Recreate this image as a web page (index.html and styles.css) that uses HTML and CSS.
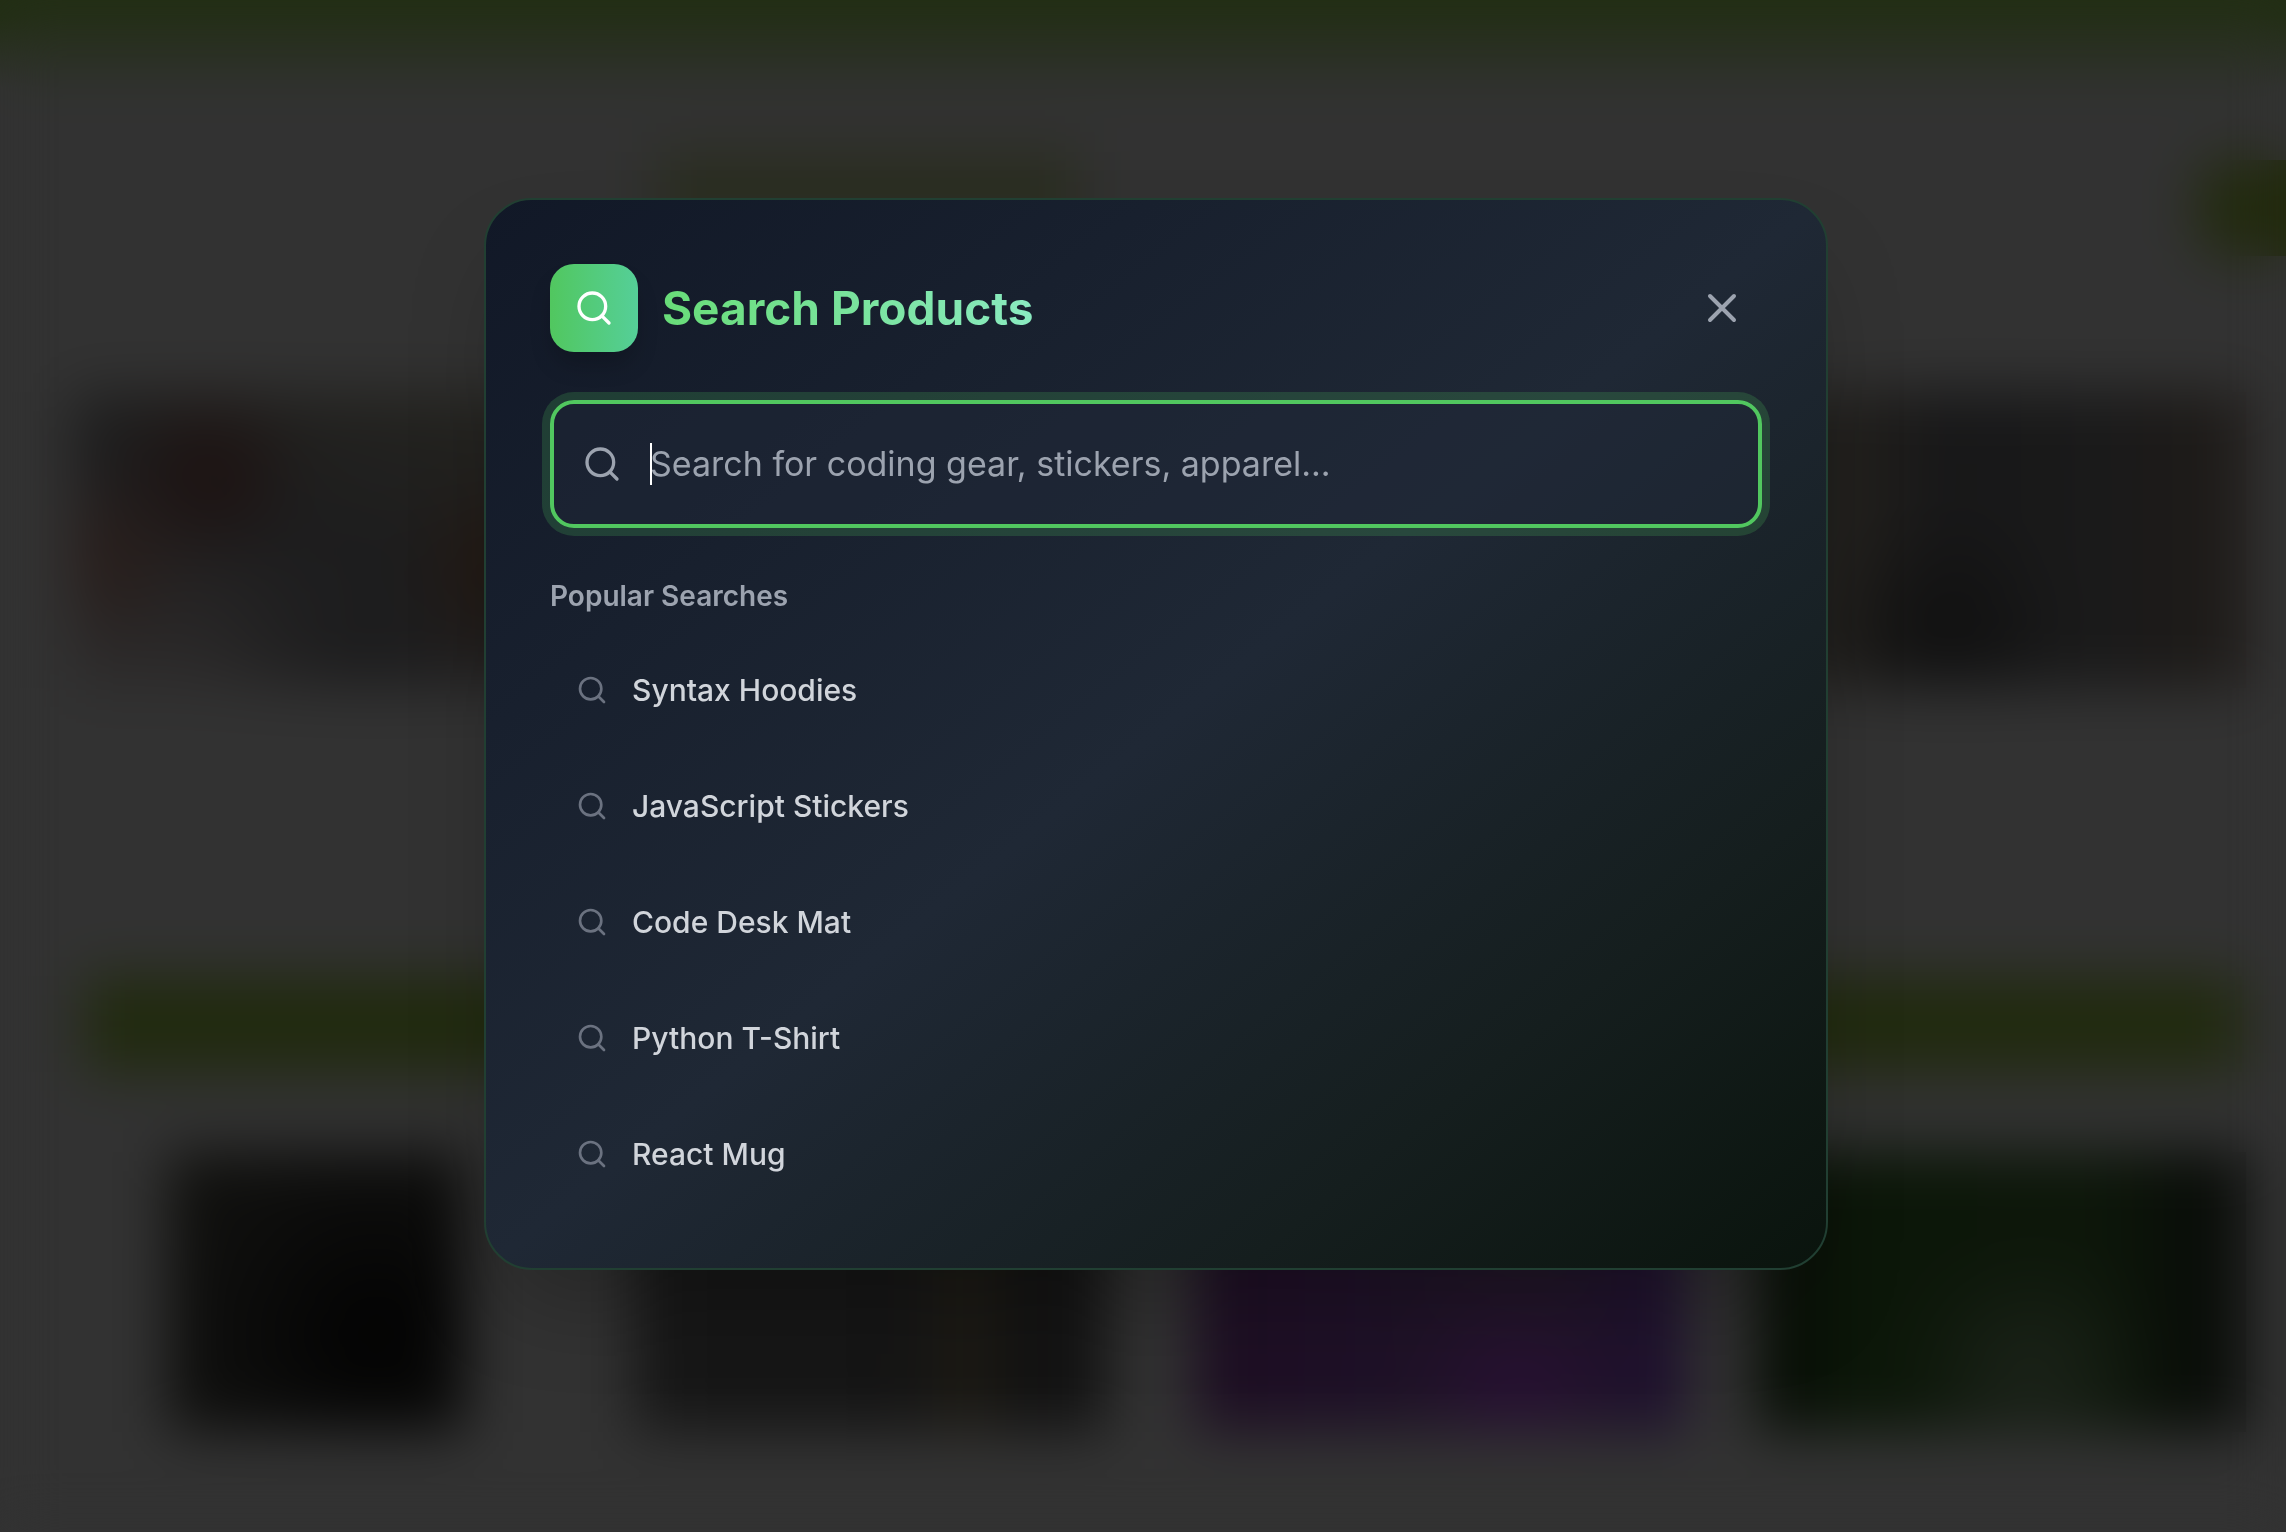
FILE: index.html
```html
<!DOCTYPE html>
<html lang="en">
<head>
<meta charset="utf-8">
<meta name="viewport" content="width=device-width, initial-scale=1">
<title>Search Products</title>
<link rel="stylesheet" href="styles.css">
</head>
<body>
<svg class="sprite" aria-hidden="true">
  <symbol id="search" viewBox="0 0 24 24"><circle cx="11" cy="11" r="8"/><path d="m21 21-4.3-4.3"/></symbol>
  <symbol id="close" viewBox="0 0 24 24"><path d="M18 6 6 18M6 6l12 12"/></symbol>
</svg>

<div class="shop" aria-hidden="true">
  <div class="shop-bar"></div>
  <div class="shop-tools">
    <div class="shop-filter"></div>
    <div class="shop-cart"></div>
  </div>
  <div class="shop-grid shop-grid-top">
    <div class="photo photo-desk"></div>
    <div class="photo photo-plain"></div>
    <div class="photo photo-plain"></div>
    <div class="photo photo-shelf"></div>
  </div>
  <div class="shop-grid shop-grid-buttons">
    <div class="buy"></div>
    <div class="buy"></div>
    <div class="buy"></div>
    <div class="buy"></div>
  </div>
  <div class="shop-grid shop-grid-bottom">
    <div class="photo photo-black"></div>
    <div class="photo photo-gray"></div>
    <div class="photo photo-purple"></div>
    <div class="photo photo-green"></div>
  </div>
</div>

<div class="overlay">
  <section class="dialog" role="dialog" aria-modal="true" aria-labelledby="dialog-title">
    <header class="dialog-header">
      <span class="badge"><svg class="icon icon-md"><use href="#search"/></svg></span>
      <h2 class="title" id="dialog-title">Search Products</h2>
      <button class="close" type="button" aria-label="Close"><svg class="icon icon-lg"><use href="#close"/></svg></button>
    </header>
    <label class="field">
      <svg class="icon icon-md" aria-hidden="true"><use href="#search"/></svg>
      <span class="caret"></span>
      <input class="input" type="text" aria-label="Search products" placeholder="Search for coding gear, stickers, apparel..." autofocus>
    </label>
    <h3 class="subtitle">Popular Searches</h3>
    <ul class="list">
      <li><button class="item" type="button"><svg class="icon icon-sm"><use href="#search"/></svg><span>Syntax Hoodies</span></button></li>
      <li><button class="item" type="button"><svg class="icon icon-sm"><use href="#search"/></svg><span>JavaScript Stickers</span></button></li>
      <li><button class="item" type="button"><svg class="icon icon-sm"><use href="#search"/></svg><span>Code Desk Mat</span></button></li>
      <li><button class="item" type="button"><svg class="icon icon-sm"><use href="#search"/></svg><span>Python T-Shirt</span></button></li>
      <li><button class="item" type="button"><svg class="icon icon-sm"><use href="#search"/></svg><span>React Mug</span></button></li>
    </ul>
  </section>
</div>
</body>
</html>
```
FILE: styles.css
```css
* { box-sizing: border-box; }

body {
  margin: 0;
  height: 100vh;
  overflow: hidden;
  background: #323232;
  font-family: Inter, "Liberation Sans", sans-serif;
}

h2, h3, ul { margin: 0; padding: 0; }
button { border: 0; background: none; font: inherit; color: inherit; cursor: pointer; }

.sprite { display: none; }
.icon {
  display: block;
  flex: none;
  fill: none;
  stroke: currentColor;
  stroke-width: 2;
  stroke-linecap: round;
  stroke-linejoin: round;
}
.icon-sm { width: 32px; height: 32px; }
.icon-md { width: 40px; height: 40px; }
.icon-lg { width: 48px; height: 48px; }

/* Shop page behind the dialog */
.shop-bar { height: 88px; background: linear-gradient(#222e14 20%, #323232); }
.shop-tools {
  display: flex;
  justify-content: space-between;
  height: 304px;
  padding: 64px 0 0 656px;
}
.shop-filter { width: 424px; height: 80px; background: #2a2d20; }
.shop-cart { width: 88px; height: 96px; margin-top: 8px; background: #222a0e; border-radius: 24px 0 0 24px; }
.shop-grid {
  display: grid;
  grid-template-columns: repeat(4, 1fr);
  gap: 72px;
  padding: 0 40px 0 72px;
}
.photo { height: 296px; }
.photo-desk {
  background:
    radial-gradient(circle at 28% 28%, #1d1110, transparent 24%),
    radial-gradient(circle at 6% 56%, #291d1a, transparent 20%),
    radial-gradient(circle at 90% 60%, #241811, transparent 24%),
    radial-gradient(circle at 60% 85%, #1c1c1d, transparent 40%),
    linear-gradient(200deg, #262520, #1d1d1e 50%, #2c2a2a 90%);
}
.photo-plain { background: #1c1c1c; }
.photo-shelf {
  background:
    radial-gradient(circle at 38% 80%, #101010, transparent 30%),
    linear-gradient(90deg, #20201e, #22201d 20%, #171718 38%, #1a1a1a 70%, #1f1b18);
}
.shop-grid-buttons { padding-top: 288px; }
.buy { height: 96px; margin: 0 4px 0 12px; background: #212a0f; }
.shop-grid-bottom { padding-top: 80px; }
.shop-grid-bottom .photo { height: 280px; }
.photo-black { margin: 0 96px; background: radial-gradient(circle at 70% 65%, #020202, #0e0e0d 60%, #12120f); }
.photo-gray { margin-right: 16px; background: linear-gradient(90deg, #171717, #151515 60%, #1f1c14 70%, #131313 80%); }
.photo-purple {
  background:
    radial-gradient(circle at 66% 86%, #281034, transparent 30%),
    linear-gradient(90deg, #1d0e22, #1e1027 30%, #1f1624 70%, #1e0f30);
}
.photo-green {
  background:
    radial-gradient(circle at 56% 80%, #1c231a, transparent 36%),
    linear-gradient(90deg, #060b05, #0c1709 20%, #0d170a 70%, #090d08 90%, #0a0c0a);
}

.overlay {
  position: fixed;
  inset: 0;
  display: flex;
  justify-content: center;
  align-items: flex-start;
  padding: 198px 0 0 26px;
  backdrop-filter: blur(28px);
}

.dialog {
  width: 100%;
  max-width: 1344px;
  padding: 64px;
  border: 2px solid #213f32;
  border-radius: 48px;
  background: linear-gradient(to bottom right, #111827, #1f2835 50%, #151e1e 78%, #0a140d) border-box;
  box-shadow: 0 48px 96px -24px rgba(0, 0, 0, 0.25);
}
.dialog-header { display: flex; align-items: center; gap: 24px; margin-bottom: 48px; }
.badge {
  padding: 24px;
  border-radius: 24px;
  color: #fff;
  background: linear-gradient(90deg, #51c75f, #55cf98);
  box-shadow: 0 16px 24px -4px rgba(0, 0, 0, 0.2);
}
.title {
  font-size: 46px;
  line-height: 64px;
  font-weight: 700;
  color: transparent;
  background: linear-gradient(90deg, #68dc78, #8aeac0);
  background-clip: text;
}
.close { margin-left: auto; padding: 16px; color: #9ca3af; }

.field {
  position: relative;
  display: flex;
  align-items: center;
  height: 128px;
  padding: 0 28px;
  border: 4px solid #51c75f;
  border-radius: 24px;
  background: rgba(31, 39, 55, 0.5);
  box-shadow: 0 0 0 8px rgba(81, 199, 95, 0.2);
  color: #9ca3af;
}
.caret { position: absolute; left: 96px; width: 2px; height: 42px; background: #fff; }
.input {
  flex: 1;
  min-width: 0;
  height: 56px;
  margin-left: 28px;
  padding: 0;
  border: 0;
  outline: 0;
  background: none;
  color: #fff;
  caret-color: transparent;
  font: 400 34px/56px Inter, "Liberation Sans", sans-serif;
}
.input::placeholder { color: #9ca3af; opacity: 1; }

.subtitle {
  margin: 48px 0 24px;
  font-size: 28px;
  line-height: 40px;
  font-weight: 600;
  color: #9ca3af;
}
.list { display: grid; gap: 16px; list-style: none; }
.item {
  display: flex;
  align-items: center;
  gap: 24px;
  width: 100%;
  padding: 24px;
  border: 2px solid transparent;
  border-radius: 24px;
  font-size: 30px;
  font-weight: 500;
  line-height: 48px;
  text-align: left;
  color: #d1d5db;
}
.item .icon { color: #6b7280; }
```
